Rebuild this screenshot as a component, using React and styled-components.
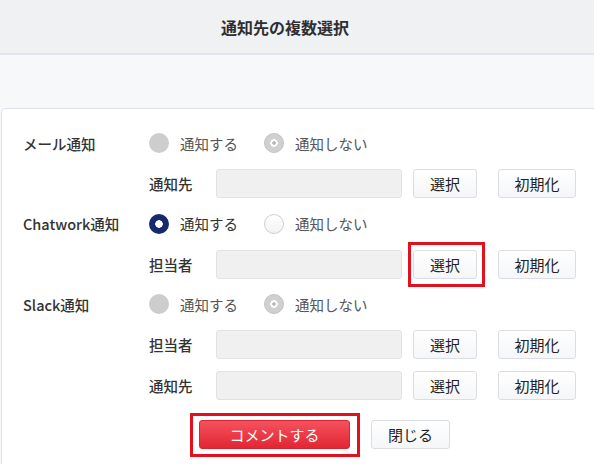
import React from 'react'
import styled, { createGlobalStyle, css } from 'styled-components'

const GlobalStyle = createGlobalStyle`
  html, body {
    margin: 0;
    padding: 0;
    background: #f7f8fa;
  }
  body {
    font-family: "Noto Sans CJK JP", "Noto Sans", sans-serif;
    color: #333;
    overflow: hidden;
  }
`

const sections = [
  {
    name: 'メール通知',
    enabled: false,
    value: 'off',
    fields: [{ label: '通知先' }],
  },
  {
    name: 'Chatwork通知',
    enabled: true,
    value: 'on',
    fields: [{ label: '担当者', highlight: true }],
  },
  {
    name: 'Slack通知',
    enabled: false,
    value: 'off',
    fields: [{ label: '担当者' }, { label: '通知先' }],
  },
]

function Radio({ checked, disabled, children }) {
  return (
    <RadioLabel $checked={checked} $disabled={disabled}>
      <RadioDot $checked={checked} $disabled={disabled} />
      {children}
    </RadioLabel>
  )
}

function App() {
  return (
    <Page>
      <GlobalStyle />
      <Header>
        <Title>通知先の複数選択</Title>
      </Header>
      <Spacer />
      <Card>
        {sections.map(section => (
          <React.Fragment key={section.name}>
            <Row>
              <SectionName>{section.name}</SectionName>
              <RadioGroup>
                <Radio checked={section.value === 'on'} disabled={!section.enabled}>
                  通知する
                </Radio>
                <Radio checked={section.value === 'off'} disabled={!section.enabled}>
                  通知しない
                </Radio>
              </RadioGroup>
            </Row>
            {section.fields.map((field, i) => (
              <FieldRow key={i}>
                <FieldName>{field.label}</FieldName>
                <Input type="text" disabled={!section.enabled} />
                {field.highlight ? (
                  <Marked $inset="-8px -8px -8px -5px">
                    <Button $width={64}>選択</Button>
                  </Marked>
                ) : (
                  <Button $width={64}>選択</Button>
                )}
                <Button $width={78}>初期化</Button>
              </FieldRow>
            ))}
          </React.Fragment>
        ))}
        <Actions>
          <Marked $inset="-7px -10px -8px -9px">
            <Button $primary $width={151}>コメントする</Button>
          </Marked>
          <Button $width={79}>閉じる</Button>
        </Actions>
      </Card>
    </Page>
  )
}

export default App

const Page = styled.div`
  display: flex;
  flex-direction: column;
  height: 100vh;
`

const Header = styled.div`
  height: 53px;
  flex-shrink: 0;
  display: flex;
  align-items: center;
  justify-content: center;
  padding-right: 24px;
  background: #f0f1f3;
  border-bottom: 2px solid #dfe5ee;
`

const Title = styled.h1`
  margin: 0;
  font-size: 16px;
  font-weight: 700;
  color: #2e2e33;
`

const Spacer = styled.div`
  height: 53px;
  flex-shrink: 0;
`

const Card = styled.div`
  flex: 1;
  margin-left: 1px;
  margin-right: -10px;
  padding: 14px 0 0 21px;
  background: #fff;
  border: 1px solid #dde3ec;
  border-bottom: none;
  border-top-left-radius: 5px;
`

const Row = styled.div`
  display: flex;
  align-items: center;
  height: 40.33px;
`

const SectionName = styled.div`
  width: 126px;
  font-size: 14.5px;
  font-weight: 500;
  color: #333;
`

const RadioGroup = styled.div`
  display: flex;
  align-items: center;
  gap: 26px;
`

const RadioLabel = styled.label`
  display: flex;
  align-items: center;
  gap: 11px;
  font-size: 14.5px;
  color: ${p => (p.$checked && !p.$disabled ? '#333' : '#555')};
`

const RadioDot = styled.span`
  width: 20px;
  height: 20px;
  box-sizing: border-box;
  border-radius: 50%;
  ${p => p.$disabled && !p.$checked && css`
    background: #cdcdcd;
  `}
  ${p => p.$disabled && p.$checked && css`
    border: 1px solid #c2c2c2;
    background: radial-gradient(circle, #b8b8b8 0 1.5px, #fff 2px 3.5px, #d0d0d0 4px);
  `}
  ${p => !p.$disabled && p.$checked && css`
    background: radial-gradient(circle, #fff 0 3.5px, #17296d 4px);
  `}
  ${p => !p.$disabled && !p.$checked && css`
    border: 1px solid #cfcfcf;
    background: linear-gradient(#fff, #f2f2f2);
  `}
`

const FieldRow = styled(Row)`
  padding-left: 126px;
`

const FieldName = styled.div`
  width: 67px;
  font-size: 14.5px;
  font-weight: 500;
  color: #333;
`

const Input = styled.input`
  width: 186px;
  height: 29px;
  box-sizing: border-box;
  margin: 0 11px 0 0;
  padding: 0 8px;
  background: #f0f0f0;
  border: 1px solid #e2e2e2;
  border-radius: 3px;
  outline: none;
`

const Button = styled.button`
  width: ${p => p.$width}px;
  height: 29px;
  box-sizing: border-box;
  margin-right: 21px;
  padding: 0;
  font-family: inherit;
  font-size: 15px;
  color: #222;
  background: linear-gradient(#fff, #f5f6f8);
  border: 1px solid #dadee3;
  border-radius: 3px;
  cursor: pointer;
  ${p => p.$primary && css`
    color: #fff;
    background: linear-gradient(#f4525d, #e22634);
    border-color: #d92432;
  `}
`

// red annotation frame drawn over a button
const Marked = styled.span`
  position: relative;
  display: inline-flex;
  margin-right: 21px;
  > ${Button} {
    margin-right: 0;
  }
  &::after {
    content: '';
    position: absolute;
    inset: ${p => p.$inset};
    border: 3px solid #e3111d;
    pointer-events: none;
  }
`

const Actions = styled.div`
  display: flex;
  align-items: center;
  padding: 15px 0 0 176px;
`
